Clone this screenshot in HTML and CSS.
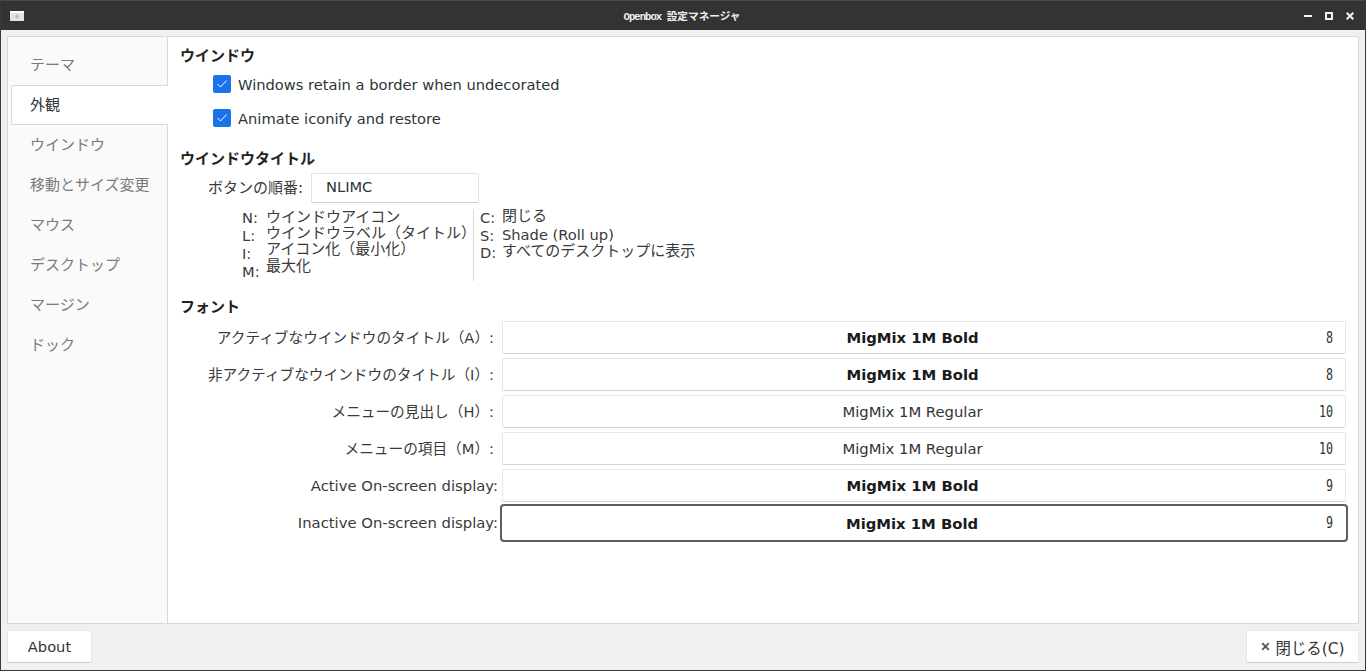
FILE: index.html
```html
<!DOCTYPE html>
<html lang="ja">
<head>
<meta charset="utf-8">
<title>Openbox 設定マネージャ</title>
<link rel="stylesheet" href="styles.css">
</head>
<body>
<div class="window">
  <header class="titlebar">
    <svg class="app-icon" width="14" height="10" viewBox="0 0 14 10"><rect width="14" height="10" fill="#e4e4e4"/><rect y="0" width="14" height="2" fill="#fff"/><circle cx="7" cy="5.5" r="2" fill="#bdbdbd"/></svg>
    <div class="title"><span class="title-lat">Openbox </span>設定マネージャ</div>
    <div class="controls">
      <svg width="8" height="8" viewBox="0 0 8 8"><rect y="3" width="8" height="2" fill="#f2f2f2"/></svg>
      <svg width="8" height="8" viewBox="0 0 8 8"><path d="M0 0H8V8H0ZM2 2V6H6V2Z" fill="#f2f2f2" fill-rule="evenodd"/></svg>
      <svg width="8" height="8" viewBox="0 0 8 8"><path d="M.7.7 7.3 7.3M7.3.7.7 7.3" stroke="#f2f2f2" stroke-width="2"/></svg>
    </div>
  </header>
  <main class="notebook">
    <nav class="tabs">
      <div class="tab">テーマ</div>
      <div class="tab active">外観</div>
      <div class="tab">ウインドウ</div>
      <div class="tab">移動とサイズ変更</div>
      <div class="tab">マウス</div>
      <div class="tab">デスクトップ</div>
      <div class="tab">マージン</div>
      <div class="tab">ドック</div>
    </nav>
    <section class="page">
      <h2 class="heading h-first">ウインドウ</h2>
      <label class="check check-first"><span class="box"><svg width="12" height="10" viewBox="0 0 12 10"><path d="M1.5 5 4.5 8 10.5 1.5" fill="none" stroke="#fff" stroke-width="1"/></svg></span>Windows retain a border when undecorated</label>
      <label class="check"><span class="box"><svg width="12" height="10" viewBox="0 0 12 10"><path d="M1.5 5 4.5 8 10.5 1.5" fill="none" stroke="#fff" stroke-width="1"/></svg></span>Animate iconify and restore</label>
      <h2 class="heading h-title">ウインドウタイトル</h2>
      <div class="order">
        <span class="order-label">ボタンの順番:</span>
        <div class="entry">NLIMC</div>
      </div>
      <div class="legend">
        <div class="keys keys-a"><span>N:</span><span>L:</span><span>I:</span><span>M:</span></div>
        <div class="vals vals-a"><span>ウインドウアイコン</span><span>ウインドウラベル（タイトル）</span><span>アイコン化（最小化）</span><span>最大化</span></div>
        <div class="sep"></div>
        <div class="keys keys-b"><span>C:</span><span>S:</span><span>D:</span></div>
        <div class="vals vals-b"><span>閉じる</span><span class="lat">Shade (Roll up)</span><span>すべてのデスクトップに表示</span></div>
      </div>
      <h2 class="heading h-font">フォント</h2>
      <div class="fonts">
        <div class="font-row"><span class="font-label">アクティブなウインドウのタイトル（A）:</span><div class="font-btn bold"><span class="font-name">MigMix 1M Bold</span><span class="font-size">8</span></div></div>
        <div class="font-row"><span class="font-label">非アクティブなウインドウのタイトル（I）:</span><div class="font-btn bold"><span class="font-name">MigMix 1M Bold</span><span class="font-size">8</span></div></div>
        <div class="font-row"><span class="font-label">メニューの見出し（H）:</span><div class="font-btn"><span class="font-name">MigMix 1M Regular</span><span class="font-size">10</span></div></div>
        <div class="font-row"><span class="font-label">メニューの項目（M）:</span><div class="font-btn"><span class="font-name">MigMix 1M Regular</span><span class="font-size">10</span></div></div>
        <div class="font-row"><span class="font-label font-label-lat">Active On-screen display:</span><div class="font-btn bold"><span class="font-name">MigMix 1M Bold</span><span class="font-size">9</span></div></div>
        <div class="font-row"><span class="font-label font-label-lat">Inactive On-screen display:</span><div class="font-btn bold focused"><span class="font-name">MigMix 1M Bold</span><span class="font-size">9</span></div></div>
      </div>
    </section>
  </main>
  <footer class="actions">
    <button class="btn btn-about">About</button>
    <button class="btn btn-close"><svg width="9" height="9" viewBox="0 0 9 9"><path d="M1.2 1.2 7.8 7.8M7.8 1.2 1.2 7.8" stroke="#555" stroke-width="1.8"/></svg>閉じる(C)</button>
  </footer>
</div>
</body>
</html>
```
FILE: styles.css
```css
* { box-sizing: border-box; }
html, body { margin: 0; height: 100%; overflow: hidden; }
body {
  font-family: "DejaVu Sans", "Noto Sans CJK JP", sans-serif;
  font-size: 15px;
  color: #2e3436;
}
.lat { font-size: 14.67px; }
.window {
  width: 1366px;
  height: 671px;
  display: flex;
  flex-direction: column;
  background: #f0f0f0;
  border: 1px solid #3a3a3a;
  border-top: 0;
}
.titlebar {
  height: 30px;
  flex: none;
  background: #333;
  border-top: 1px solid #4a4a4a;
  display: flex;
  align-items: center;
  padding: 0 11px 0 9px;
  position: relative;
}
.title {
  flex: 1;
  text-align: center;
  color: #f0f0f0;
  font-family: "Noto Sans CJK JP", sans-serif;
  font-size: 10.67px;
  font-weight: bold;
  padding-left: 36px;
}
.title-lat { font-family: "Liberation Mono", monospace; font-size: 10.67px; letter-spacing: -1px; white-space: pre; }
.controls { display: flex; gap: 13px; align-items: center; }
.controls svg { display: block; }
.notebook {
  margin: 6px 6px 0 6px;
  height: 588px;
  flex: none;
  display: flex;
  background: #fff;
  border: 1px solid #d8d8d8;
}
.tabs {
  width: 160px;
  flex: none;
  background: #fafafa;
  border-right: 1px solid #d8d8d8;
  padding-top: 8px;
}
.tab {
  height: 40px;
  padding-left: 22px;
  line-height: 40px;
  color: #7a7a7a;
  font-size: 15px;
}
.tab.active {
  height: 40px;
  margin-left: 3px;
  margin-right: -1px;
  padding-left: 18px;
  background: #fff;
  color: #2e3436;
  border: 1px solid #d8d8d8;
  border-right: 0;
  border-radius: 2px 0 0 2px;
  position: relative;
  line-height: 39px;
}
.page { flex: 1; min-width: 0; padding: 0 12px 0 13px; }
.heading {
  margin: 0 0 0 -1px;
  font-size: 15px;
  font-weight: bold;
  line-height: 20px;
  color: #222;
}
.h-first { margin-top: 9px; }
.check {
  display: flex;
  align-items: center;
  height: 18px;
  margin-top: 16px;
  margin-left: 32px;
  font-size: 14.67px;
  white-space: nowrap;
}
.check-first { margin-top: 9px; }
.box {
  width: 18px;
  height: 18px;
  margin-right: 7px;
  border-radius: 2px;
  background: #1a73e8;
  display: flex;
  align-items: center;
  justify-content: center;
}
.h-title { margin-top: 22px; }
.order { display: flex; align-items: center; margin-top: 4px; margin-left: 27px; }
.order-label { width: 103px; font-size: 15px; color: #3a3a3a; padding-bottom: 3px; }
.entry {
  width: 168px;
  height: 30px;
  background: #fff;
  border: 1px solid #e2e2e2;
  border-bottom-color: #d0d0d0;
  border-radius: 2px;
  padding-left: 14px;
  line-height: 26px;
  font-size: 14.67px;
}
.legend { display: flex; margin-top: 6px; height: 72px; font-size: 15px; color: #3a3a3a; }
.keys, .vals { display: flex; flex-direction: column; white-space: nowrap; }
.keys-a { margin-left: 61px; width: 24px; line-height: 17.9px; font-size: 14.67px; }
.vals-a { width: 207px; line-height: 16.2px; }
.sep { width: 1px; height: 72px; background: #d8d8d8; margin-right: 6px; }
.keys-b { width: 22px; line-height: 17.7px; font-size: 14.67px; }
.vals-b { line-height: 17.6px; margin-top: -1px; }
.h-font { margin-top: 16px; }
.fonts { display: flex; flex-direction: column; gap: 4px; margin-top: 4px; }
.font-row { display: flex; align-items: center; height: 33px; }
.font-label {
  width: 321px;
  flex: none;
  padding: 0 8px 2px 0;
  text-align: right;
  white-space: nowrap;
  font-size: 14.67px;
  color: #3a3a3a;
}
.font-label-lat { padding: 0 4px 0 0; font-size: 14.8px; }
.font-btn {
  flex: 1;
  min-width: 0;
  height: 33px;
  background: #fff;
  border: 1px solid #e6e6e6;
  border-bottom-color: #d2d2d2;
  border-radius: 2px;
  display: flex;
  align-items: center;
  padding: 0 12px 0 0;
  font-size: 14.8px;
  color: #333;
}
.font-name { flex: 1; text-align: center; padding-left: 11px; }
.bold .font-name { font-weight: bold; color: #1a1a1a; }
.font-size {
  font-family: "DejaVu Sans Mono", monospace;
  font-size: 15px;
  width: 22px;
  text-align: right;
  transform: scaleX(.78);
  transform-origin: right center;
}
.focused {
  border: 2px solid #5e5e5e;
  height: 38px;
  margin: -2px -2px -3px -2px;
  border-radius: 4px;
}
.focused .font-size { margin-right: 1px; }
.actions {
  flex: 1;
  display: flex;
  justify-content: space-between;
  align-items: flex-start;
  padding: 6px 6px 0 6px;
}
.btn {
  height: 33px;
  background: #fff;
  border: 1px solid #e6e6e6;
  border-bottom-color: #cfcfcf;
  border-radius: 2px;
  font: inherit;
  font-size: 14.67px;
  color: #333;
  display: flex;
  align-items: center;
  justify-content: center;
  padding: 0;
}
.btn-about { width: 85px; }
.btn-close { width: 113px; gap: 6px; font-size: 15.4px; }
```
